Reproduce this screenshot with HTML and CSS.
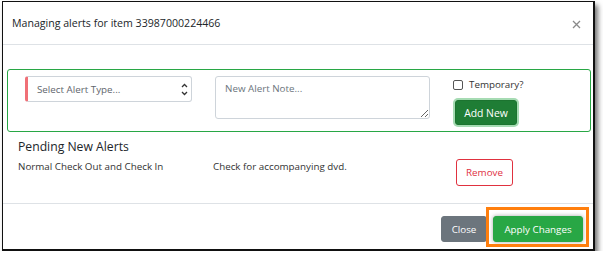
FILE: index.html
```html
<!DOCTYPE html>
<html>
<head>
<meta charset="utf-8">
<link rel="stylesheet" href="styles.css">
</head>
<body>
<div class="frame">
  <div class="header">
    <div class="title">Managing alerts for item 33987000224466</div>
    <svg class="xclose" width="9" height="9" viewBox="0 0 9 9"><path d="M1 1L8 8M8 1L1 8" stroke="#8a8a8a" stroke-width="1.3" fill="none"/></svg>
  </div>
  <div class="body">
    <div class="newbox">
      <div class="select">
        <span class="ph">Select Alert Type...</span>
        <svg class="arrows" width="7" height="15" viewBox="0 0 7 15"><path d="M1 5L3.5 2.5L6 5M1 10L3.5 12.5L6 10" stroke="#333" stroke-width="1.3" fill="none"/></svg>
      </div>
      <textarea class="note" placeholder="New Alert Note..."></textarea>
      <div class="addcol">
        <label class="temp"><span class="cb"></span>Temporary?</label>
        <button class="btn addnew">Add New</button>
      </div>
    </div>
    <div class="pending-title">Pending New Alerts</div>
    <div class="pending-row">
      <div class="cell">Normal Check Out and Check In</div>
      <div class="cell">Check for accompanying dvd.</div>
      <div><button class="btn remove">Remove</button></div>
    </div>
  </div>
  <div class="footer">
    <button class="btn closebtn">Close</button>
    <button class="btn apply">Apply Changes</button>
  </div>
</div>
</body>
</html>
```

FILE: styles.css
```css
html, body {
  margin: 0;
  padding: 0;
  background: #fff;
}
body {
  font-family: "Open Sans", "Noto Sans", sans-serif;
  color: #212529;
}
.frame {
  margin: 1px 0 0 2px;
  width: 593px;
  height: 250px;
  box-sizing: border-box;
  border: 1px solid #111;
  border-right-width: 2px;
  border-bottom-width: 2px;
  box-shadow: 3px 4px 5px rgba(0,0,0,0.55);
  display: flex;
  flex-direction: column;
  background: #fff;
}
.header {
  height: 42px;
  border-bottom: 1px solid #dee2e6;
  display: flex;
  align-items: center;
  justify-content: space-between;
  padding: 0 12px 0 9px;
  flex: none;
}
.title {
  font-size: 10.6px;
  color: #212529;
  padding-bottom: 1px;
}
.xclose {
  display: block;
  margin-top: 2px;
}
.body {
  height: 159px;
  padding: 24px 2px 0 4px;
  box-sizing: border-box;
  border-bottom: 1px solid #dee2e6;
  flex: none;
}
.newbox {
  height: 63px;
  box-sizing: border-box;
  border: 1px solid #28a745;
  border-radius: 3px;
  display: flex;
  align-items: flex-start;
  padding: 6px 0 0 17px;
}
.select {
  width: 167px;
  height: 26px;
  box-sizing: border-box;
  border: 1px solid #ced4da;
  border-left: 3px solid #f07077;
  border-radius: 3px;
  display: flex;
  align-items: center;
  justify-content: space-between;
  padding: 0 3px 0 9px;
  font-size: 9.8px;
  color: #5f666d;
}
.arrows { display: block; }
.note {
  margin: 0 0 0 23px;
  width: 215px;
  height: 43px;
  box-sizing: border-box;
  border: 1px solid #ced4da;
  border-radius: 3px;
  padding: 5px 9px;
  font-family: "Open Sans", "Noto Sans", sans-serif;
  font-size: 9.8px;
  resize: vertical;
  outline: none;
}
.note::placeholder { color: #6c757d; }
.addcol {
  margin-left: 23px;
  display: flex;
  flex-direction: column;
  align-items: flex-start;
}
.temp {
  display: flex;
  align-items: center;
  font-size: 9.8px;
  color: #333;
  margin-top: 2px;
  height: 13px;
}
.cb {
  width: 10px;
  height: 10px;
  box-sizing: border-box;
  border: 1px solid #555;
  border-radius: 2px;
  margin-right: 6px;
  background: #fff;
}
.btn {
  font-family: "Open Sans", "Noto Sans", sans-serif;
  border-radius: 3px;
  cursor: pointer;
  padding: 0;
  box-sizing: border-box;
}
.addnew {
  margin: 9px 0 0 2px;
  width: 62px;
  height: 25px;
  background: #1f7d35;
  border: 1px solid #1c7430;
  color: #fff;
  font-size: 10.4px;
  box-shadow: 0 0 0 2px rgba(92, 190, 116, 0.55);
}
.pending-title {
  margin: 7px 0 0 11px;
  font-size: 12.2px;
  line-height: 16px;
  color: #212529;
}
.pending-row {
  margin: 4px 0 0 11px;
  display: grid;
  grid-template-columns: 195px 243px auto;
  align-items: start;
}
.cell {
  font-size: 9.8px;
  line-height: 14px;
  padding-top: 1px;
  color: #333;
}
.remove {
  width: 57px;
  height: 27px;
  background: #fff;
  border: 1px solid #e0313f;
  color: #e0313f;
  font-size: 9.8px;
}
.footer {
  flex: 1;
  display: flex;
  justify-content: flex-end;
  align-items: flex-start;
  padding: 12px 10px 0 0;
  gap: 6px;
}
.closebtn {
  width: 46px;
  height: 26px;
  background: #6c757d;
  border: 1px solid #6c757d;
  color: #fff;
  font-size: 9.8px;
}
.apply {
  position: relative;
  width: 90px;
  height: 26px;
  background: #28a745;
  border: 1px solid #28a745;
  color: #fff;
  font-size: 9.8px;
  box-shadow: 0 0 4px rgba(0,0,0,0.35);
}
.apply::after {
  content: "";
  position: absolute;
  top: -10px;
  left: -8px;
  right: -7px;
  bottom: -6px;
  border: 3px solid #ff7f0e;
  pointer-events: none;
}
```
